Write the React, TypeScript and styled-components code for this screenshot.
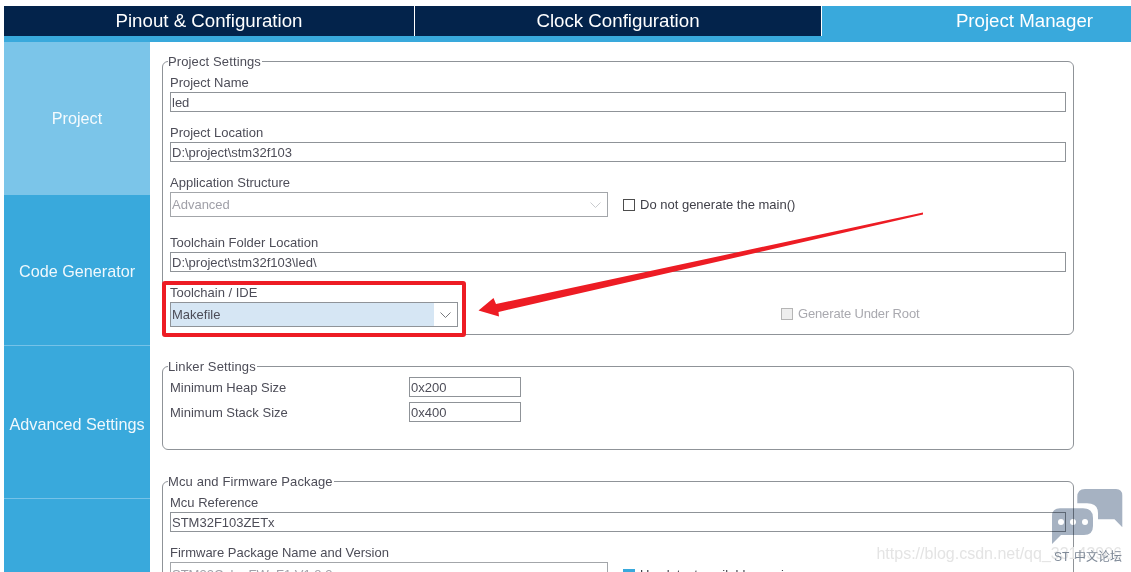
import React from "react";
import styled, { createGlobalStyle } from "styled-components";

const GlobalStyle = createGlobalStyle`
  html, body {
    margin: 0;
    padding: 0;
    background: #ffffff;
    height: 572px;
    overflow: hidden;
  }
  * {
    box-sizing: border-box;
  }
`;

const TABS = [
  { label: "Pinout & Configuration", width: 411, active: false, align: "center" },
  { label: "Clock Configuration", width: 407, active: false, align: "center" },
  { label: "Project Manager", width: 309, active: true, align: "right" },
];

const SIDE_ITEMS = [
  { label: "Project", height: 153, active: true, nudge: 0 },
  { label: "Code Generator", height: 151, active: false, nudge: 3 },
  { label: "Advanced Settings", height: 153, active: false, nudge: 5 },
  { label: "", height: 74, active: false, nudge: 0 },
];

function Chevron() {
  return (
    <svg width="11" height="6" viewBox="0 0 11 6" fill="none">
      <path d="M0.5 0.5L5.5 5.5L10.5 0.5" stroke="currentColor" strokeWidth="1" />
    </svg>
  );
}

export default function App() {
  return (
    <Page>
      <GlobalStyle />
      <TabBar>
        {TABS.map((tab) => (
          <Tab key={tab.label} $active={tab.active} $width={tab.width} $align={tab.align}>
            {tab.label}
          </Tab>
        ))}
      </TabBar>
      <TabStrip />
      <Body>
        <Sidebar>
          {SIDE_ITEMS.map((item, i) => (
            <SideItem key={i} $active={item.active} $height={item.height} $nudge={item.nudge}>
              {item.label}
            </SideItem>
          ))}
        </Sidebar>
        <Content>
          <Group $height={281}>
            <Legend>Project Settings</Legend>
            <FieldLabel $top={6}>Project Name</FieldLabel>
            <TextBox>led</TextBox>
            <FieldLabel $top={12}>Project Location</FieldLabel>
            <TextBox>D:\project\stm32f103</TextBox>
            <FieldLabel $top={12}>Application Structure</FieldLabel>
            <ComboRow>
              <Combo $width={438} $disabled>
                <ComboText $disabled>Advanced</ComboText>
                <ComboArrow $disabled>
                  <Chevron />
                </ComboArrow>
              </Combo>
              <CheckLabel>
                <CheckBox />
                Do not generate the main()
              </CheckLabel>
            </ComboRow>
            <FieldLabel $top={17}>Toolchain Folder Location</FieldLabel>
            <TextBox>D:\project\stm32f103\led\</TextBox>
            <ToolchainRow>
              <ToolchainField>
                <FieldLabel>Toolchain / IDE</FieldLabel>
                <Combo $width={288}>
                  <ComboText $selected>Makefile</ComboText>
                  <ComboArrow>
                    <Chevron />
                  </ComboArrow>
                </Combo>
                <RedFrame />
              </ToolchainField>
              <GenerateRoot>
                <CheckLabel $disabled>
                  <CheckBox $disabled />
                  Generate Under Root
                </CheckLabel>
              </GenerateRoot>
            </ToolchainRow>
          </Group>

          <Group $height={91} $top={24}>
            <Legend>Linker Settings</Legend>
            <LinkerRow $top={4}>
              <LinkerLabel>Minimum Heap Size</LinkerLabel>
              <ShortBox>0x200</ShortBox>
            </LinkerRow>
            <LinkerRow $top={5}>
              <LinkerLabel>Minimum Stack Size</LinkerLabel>
              <ShortBox>0x400</ShortBox>
            </LinkerRow>
          </Group>

          <Group $height={180} $top={24}>
            <Legend>Mcu and Firmware Package</Legend>
            <FieldLabel $top={6}>Mcu Reference</FieldLabel>
            <TextBox>STM32F103ZETx</TextBox>
            <FieldLabel $top={12}>Firmware Package Name and Version</FieldLabel>
            <ComboRow>
              <Combo $width={438} $disabled>
                <ComboText $disabled>STM32Cube FW_F1 V1.8.3</ComboText>
                <ComboArrow $disabled>
                  <Chevron />
                </ComboArrow>
              </Combo>
              <CheckLabel>
                <CheckBox $checked />
                Use latest available version
              </CheckLabel>
            </ComboRow>
          </Group>
        </Content>
      </Body>

      <ArrowDrawing viewBox="0 0 1131 572">
        <polygon
          points="923,212.5 923,214.5 498.5,312 499,316.5 478.5,310.5 493.5,298 496,304"
          fill="#ed1c24"
        />
      </ArrowDrawing>

      <Watermark>
        <WatermarkUrl>https://blog.csdn.net/qq_33143906</WatermarkUrl>
        <WatermarkIcon viewBox="0 0 71 55">
          <path
            d="M25.3 14.3V8Q25.3 0 33 0H64Q70.3 0 70.3 6.5V38.3L62.5 30.3H46V24Q46 14.3 35 14.3Z"
            fill="#a6b2c2"
          />
          <path
            d="M0 27Q0 19.3 8 19.3H31Q41 19.3 41 29V37Q41 46 32 46H9L0 55Z"
            fill="#a6b2c2"
          />
          <circle cx="9" cy="33" r="3" fill="#fff" />
          <circle cx="21" cy="33" r="3" fill="#fff" />
          <circle cx="33" cy="33" r="3" fill="#fff" />
        </WatermarkIcon>
        <WatermarkName>ST 中文论坛</WatermarkName>
      </Watermark>
    </Page>
  );
}

const Page = styled.div`
  position: relative;
  width: 1131px;
  height: 572px;
  overflow: hidden;
  padding: 6px 0 0 4px;
  font-family: "Liberation Sans", Arial, sans-serif;
  font-size: 13px;
  color: #4d4d58;
`;

const TabBar = styled.div`
  display: flex;
  height: 30px;
`;

const Tab = styled.div<{ $active: boolean; $width: number; $align: string }>`
  width: ${({ $width }) => $width}px;
  display: flex;
  align-items: center;
  justify-content: ${({ $align }) => ($align === "right" ? "flex-end" : "center")};
  padding-right: ${({ $align }) => ($align === "right" ? "38px" : "0")};
  background: ${({ $active }) => ($active ? "#39a9dc" : "#03234b")};
  border-right: 1px solid #ffffff;
  color: #ffffff;
  font-size: 18.7px;
  &:last-child {
    border-right: 0;
  }
`;

const TabStrip = styled.div`
  height: 6px;
  background: #39a9dc;
`;

const Body = styled.div`
  display: flex;
`;

const Sidebar = styled.div`
  width: 146px;
  flex: none;
  display: flex;
  flex-direction: column;
`;

const SideItem = styled.div<{ $active: boolean; $height: number; $nudge: number }>`
  height: ${({ $height }) => $height}px;
  flex: none;
  display: flex;
  align-items: center;
  justify-content: center;
  padding-top: ${({ $nudge }) => $nudge}px;
  background: ${({ $active }) => ($active ? "#7bc5e9" : "#39a9dc")};
  border-bottom: 1px solid #76c2e8;
  color: rgba(255, 255, 255, 0.92);
  font-size: 16.2px;
  &:first-child,
  &:last-child {
    border-bottom: 0;
  }
`;

const Content = styled.div`
  flex: none;
  width: 923px;
  padding: 12px 0 0 12px;
`;

const Group = styled.fieldset<{ $height: number; $top?: number }>`
  margin: ${({ $top }) => $top ?? 0}px 0 0;
  padding: 0 7px;
  width: 912px;
  height: ${({ $height }) => $height}px;
  border: 1px solid #8f9398;
  border-radius: 6px;
  min-width: 0;
`;

const Legend = styled.legend`
  padding: 0 1px 0 0;
  margin-left: -2px;
  font-size: 13px;
  line-height: 16px;
  height: 14px;
  letter-spacing: 0.12px;
`;

const FieldLabel = styled.div<{ $top?: number }>`
  margin-top: ${({ $top }) => $top ?? 0}px;
  height: 16px;
  line-height: 18px;
  margin-bottom: 2px;
`;

const TextBox = styled.div`
  width: 896px;
  height: 20px;
  line-height: 20px;
  padding-left: 1px;
  border: 1px solid #8f9398;
  color: #4d4d58;
`;

const ComboRow = styled.div`
  display: flex;
  align-items: center;
`;

const Combo = styled.div<{ $width: number; $disabled?: boolean }>`
  width: ${({ $width }) => $width}px;
  height: 25px;
  flex: none;
  display: flex;
  border: 1px solid ${({ $disabled }) => ($disabled ? "#a3a6aa" : "#8f9398")};
`;

const ComboText = styled.div<{ $disabled?: boolean; $selected?: boolean }>`
  flex: 1;
  padding-left: 1px;
  line-height: 24px;
  color: ${({ $disabled }) => ($disabled ? "#a0a0a8" : "#4d4d58")};
  background: ${({ $selected }) => ($selected ? "#d6e6f4" : "transparent")};
`;

const ComboArrow = styled.div<{ $disabled?: boolean }>`
  width: 23px;
  flex: none;
  display: flex;
  align-items: center;
  justify-content: center;
  color: ${({ $disabled }) => ($disabled ? "#c9cbce" : "#77797d")};
`;

const CheckLabel = styled.div<{ $disabled?: boolean }>`
  display: flex;
  align-items: center;
  gap: 5px;
  margin-left: 15px;
  letter-spacing: ${({ $disabled }) => ($disabled ? "-0.15px" : "0")};
  color: ${({ $disabled }) => ($disabled ? "#a9a9af" : "#3f3f48")};
`;

const CheckBox = styled.span<{ $disabled?: boolean; $checked?: boolean }>`
  width: 12px;
  height: 12px;
  flex: none;
  border: 1px solid ${({ $disabled, $checked }) => ($checked ? "#39a9dc" : $disabled ? "#b5b5b5" : "#4d4d4d")};
  background: ${({ $disabled, $checked }) => ($checked ? "#39a9dc" : $disabled ? "#eeeeee" : "#ffffff")};
`;

const ToolchainRow = styled.div`
  display: flex;
  align-items: flex-end;
  margin-top: 12px;
`;

const ToolchainField = styled.div`
  position: relative;
  width: 289px;
`;

const GenerateRoot = styled.div`
  margin-left: 307px;
  margin-bottom: 6px;
`;

const RedFrame = styled.div`
  position: absolute;
  left: -8px;
  top: -3px;
  width: 304px;
  height: 56px;
  border: 4px solid #ed1c24;
  border-radius: 3px;
`;

const LinkerRow = styled.div<{ $top?: number }>`
  display: flex;
  align-items: center;
  margin-top: ${({ $top }) => $top ?? 3}px;
`;

const LinkerLabel = styled.div`
  width: 239px;
`;

const ShortBox = styled.div`
  width: 112px;
  height: 20px;
  line-height: 20px;
  padding-left: 1px;
  border: 1px solid #8f9398;
`;

const ArrowDrawing = styled.svg`
  position: absolute;
  left: 0;
  top: 0;
  width: 1131px;
  height: 572px;
  pointer-events: none;
`;

const Watermark = styled.div`
  position: absolute;
  left: 0;
  top: 0;
  width: 1131px;
  height: 572px;
  pointer-events: none;
`;

const WatermarkUrl = styled.div`
  position: absolute;
  right: 9px;
  top: 544px;
  font-size: 16px;
  line-height: 20px;
  color: #e4e4e4;
  white-space: nowrap;
`;

const WatermarkIcon = styled.svg`
  position: absolute;
  left: 1052px;
  top: 489px;
  width: 71px;
  height: 55px;
  mix-blend-mode: multiply;
`;

const WatermarkName = styled.div`
  position: absolute;
  right: 9px;
  top: 549px;
  font-family: "Liberation Sans", "Noto Sans CJK SC", sans-serif;
  font-size: 12px;
  word-spacing: 1.5px;
  line-height: 16px;
  color: #7f8a98;
  white-space: nowrap;
`;
